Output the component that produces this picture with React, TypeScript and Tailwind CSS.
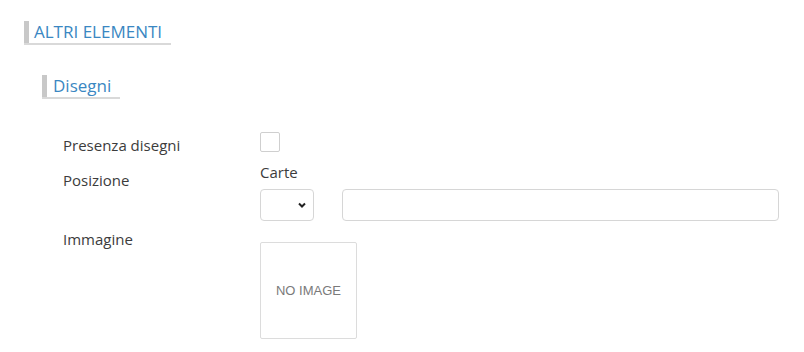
import React from "react";

export default function App() {
  const font = { fontFamily: '"Open Sans", "Noto Sans", sans-serif' };
  return (
    <div className="w-[804px] h-[352px] bg-white overflow-hidden" style={font}>
      <div className="pt-[21px] pl-[24px]">
        <div className="flex w-fit items-stretch border-b-2 border-[#d9d9d9] pr-[9px]">
          <div className="w-[5px] bg-[#c8c8c8]" />
          <div className="pl-[5px] text-[17px] leading-[22px] text-[#3a87c2]">ALTRI ELEMENTI</div>
        </div>
      </div>
      <div className="pt-[30px] pl-[42px]">
        <div className="flex w-fit items-stretch border-b-2 border-[#d9d9d9] pr-[9px]">
          <div className="w-[5px] bg-[#c8c8c8]" />
          <div className="pl-[6px] text-[17px] leading-[22px] text-[#3a87c2]">Disegni</div>
        </div>
      </div>
      <div className="pl-[63px] pt-[33px] text-[15px] text-[#3c3c3c]">
        <div className="flex items-start">
          <div className="w-[197px] mt-[2px] leading-[22px]">Presenza disegni</div>
          <div className="w-[20px] h-[20px] border border-[#cfcfcf] rounded-[2px]" />
        </div>
        <div className="flex items-start mt-[5px]">
          <div className="w-[197px] pt-[8px] leading-[22px]">Posizione</div>
          <div className="flex flex-col">
            <div className="leading-[22px]">Carte</div>
            <div className="flex gap-[28px] mt-[6px]">
              <div className="w-[54px] h-[32px] border border-[#d6d6d6] rounded-[4px] flex items-center justify-end pr-[6px]">
                <svg width="10" height="8" viewBox="0 0 10 8">
                  <path d="M2 2.5 L5 5.5 L8 2.5" stroke="#222" strokeWidth="2" fill="none" />
                </svg>
              </div>
              <div className="w-[437px] h-[32px] border border-[#d6d6d6] rounded-[4px]" />
            </div>
          </div>
        </div>
        <div className="flex items-start mt-[7px]">
          <div className="w-[197px] leading-[22px]">Immagine</div>
          <div
            className="w-[97px] h-[97px] border border-[#dcdcdc] rounded-[2px] mt-[14px] flex items-center justify-center text-[13px] text-[#7a7a7a]"
            style={{ fontFamily: '"Liberation Sans", Arial, sans-serif' }}
          >
            NO IMAGE
          </div>
        </div>
      </div>
    </div>
  );
}
